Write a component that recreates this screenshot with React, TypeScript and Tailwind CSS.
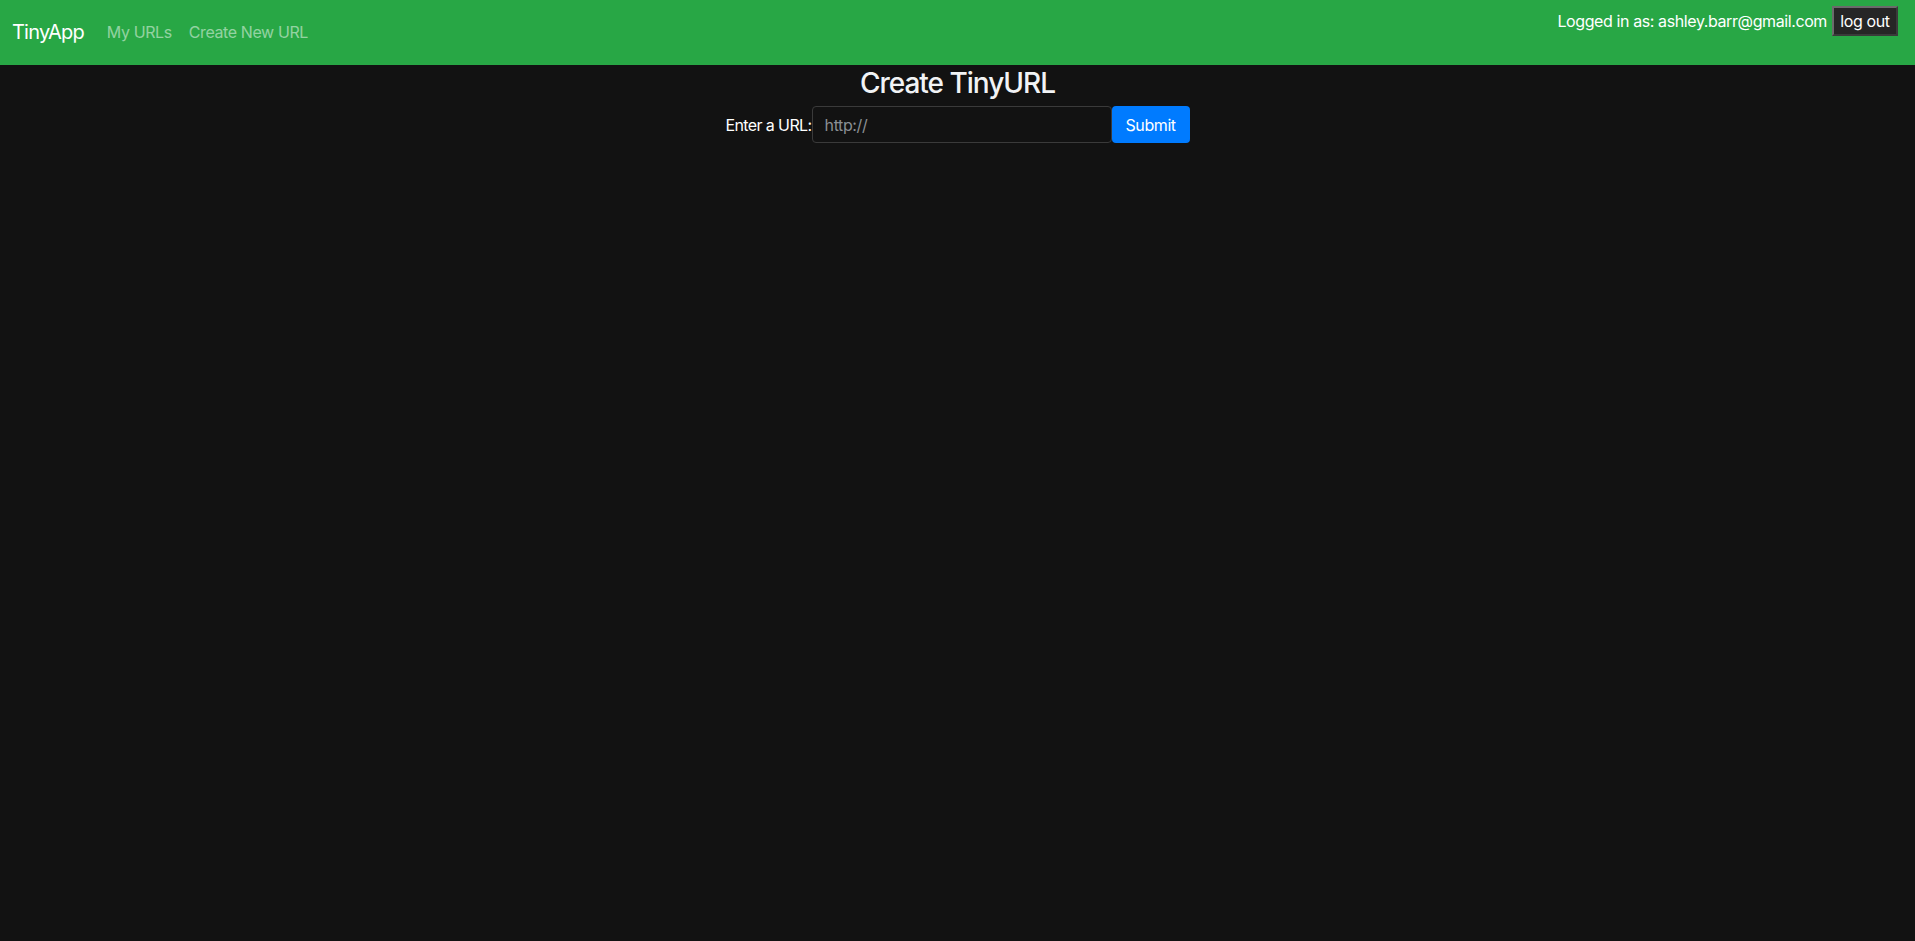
export default function App() {
  return (
    <div className="min-h-[941px] bg-[#121212] font-['Inter','Helvetica',sans-serif] tracking-[-0.4px] text-white">
      <nav className="flex h-[65px] items-start justify-between bg-[#28a745] pl-3 pr-[17px]">
        <div className="flex items-center pt-[20px]">
          <a href="#" className="mr-[23px] text-[20px] leading-[24px] tracking-[-0.8px] text-white">
            TinyApp
          </a>
          <a href="#" className="mr-[17px] text-[16px] leading-[24px] text-white/50">
            My URLs
          </a>
          <a href="#" className="text-[16px] leading-[24px] text-white/50">
            Create New URL
          </a>
        </div>
        <div className="flex items-center pt-[6px]">
          <span className="mr-[5px] text-[16px] leading-[24px] text-white">
            Logged in as: ashley.barr@gmail.com
          </span>
          <button className="h-[30px] w-[66px] border-2 border-t-[#6b6b6b] border-l-[#6b6b6b] border-r-[#3a3a3a] border-b-[#3a3a3a] bg-[#262626] text-[16px] text-white">
            log out
          </button>
        </div>
      </nav>
      <main className="flex flex-col items-center">
        <h3 className="mt-[2px] text-[28px] font-medium leading-[32px] tracking-[-1px] text-[#f1f3f5]">
          Create TinyURL
        </h3>
        <form className="mt-[7px] flex items-center">
          <label className="text-[16px] tracking-[-0.6px] text-white">Enter a URL:</label>
          <input
            type="text"
            placeholder="http://"
            className="h-[37px] w-[300px] rounded-[4px] border border-[#3a3a3a] bg-[#121212] px-3 text-[16px] text-white placeholder:text-[#8a8f94] outline-none"
          />
          <button
            type="button"
            className="h-[37px] w-[78px] rounded-[4px] bg-[#007bff] text-[16px] text-white"
          >
            Submit
          </button>
        </form>
      </main>
    </div>
  );
}
